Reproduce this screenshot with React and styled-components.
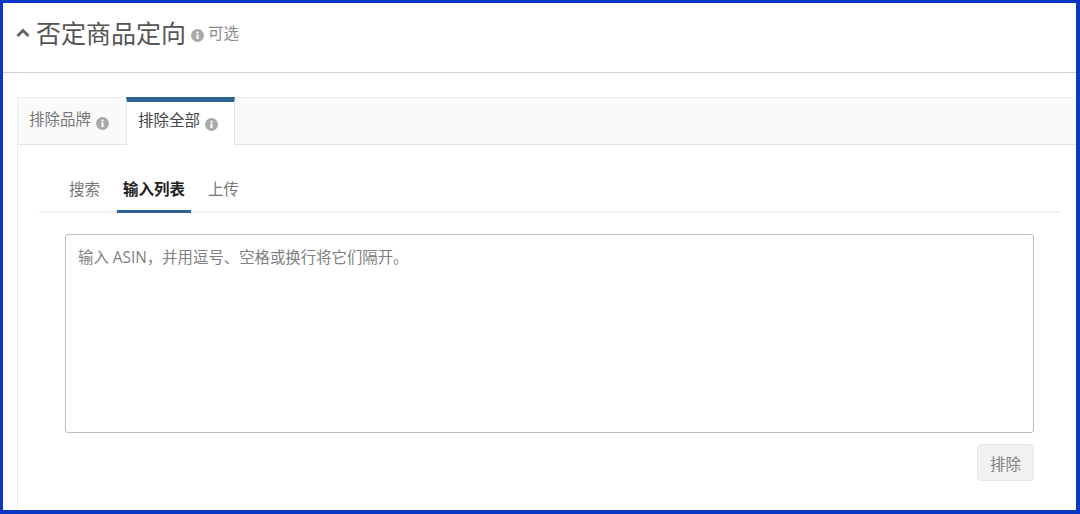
import React from "react";
import styled, { createGlobalStyle } from "styled-components";

const Global = createGlobalStyle`
  html, body { margin: 0; padding: 0; background: #fff; }
  body { font-family: "Open Sans", "Noto Sans CJK SC", sans-serif; }
`;

const Frame = styled.div`
  box-sizing: border-box;
  width: 1080px;
  height: 514px;
  border-style: solid;
  border-color: #0a37c4;
  border-width: 3px 4px 4px 3px;
  overflow: hidden;
  background: #fff;
`;

const Header = styled.header`
  box-sizing: border-box;
  height: 70px;
  border-bottom: 1px solid #cfcfcf;
  display: flex;
  align-items: flex-start;
  padding: 12px 0 0 13px;
`;

const Chevron = styled.svg`
  width: 14px;
  height: 10px;
  margin: 13px 6px 0 0;
  flex: none;
`;

const Title = styled.h1`
  margin: 0;
  font-size: 25px;
  line-height: 34px;
  font-weight: 400;
  color: #555;
  font-family: "Noto Sans CJK SC", sans-serif;
`;

const Optional = styled.span`
  font-size: 15.5px;
  line-height: 20px;
  color: #8a8a8a;
  font-family: "Noto Sans CJK SC", sans-serif;
  margin: 7px 0 0 4px;
`;

const InfoSvg = styled.svg`
  width: 13px;
  height: 13px;
  flex: none;
  margin: ${(p) => p.$margin};
`;

const Info = ({ margin }) => (
  <InfoSvg viewBox="0 0 13 13" $margin={margin}>
    <circle cx="6.5" cy="6.5" r="6.5" fill="#a9a9a9" />
    <rect x="5.5" y="5.5" width="2" height="4.6" fill="#fff" />
    <rect x="5.5" y="2.7" width="2" height="1.9" fill="#fff" />
  </InfoSvg>
);

const Panel = styled.section`
  margin: 24px 0 0 14px;
  border-left: 1px solid #ececec;
  height: 414px;
`;

const TabBar = styled.div`
  box-sizing: border-box;
  height: 48px;
  display: flex;
  background: #fafafa;
  border-top: 1px solid #ececec;
  border-bottom: 1px solid #e4e4e4;
`;

const Tab = styled.div`
  box-sizing: border-box;
  display: flex;
  align-items: flex-start;
  font-size: 15.5px;
  line-height: 22px;
  font-family: "Noto Sans CJK SC", sans-serif;
  ${(p) =>
    p.$active
      ? `
    width: 109px;
    height: 48px;
    margin-top: -1px;
    padding: 6px 0 0 11px;
    color: #444;
    background: #fff;
    border-top: 5px solid #2e6396;
    border-left: 1px solid #e8e8e8;
    border-right: 1px solid #e4e4e4;
  `
      : `
    width: 108px;
    padding: 9px 0 0 11px;
    color: #777;
  `}
`;

const Body = styled.div`
  padding: 30px 0 0 21px;
`;

const SubTabs = styled.nav`
  width: 1021px;
  height: 38px;
  box-sizing: border-box;
  border-bottom: 2px solid #f0f0f0;
  display: flex;
  padding-left: 24px;
  gap: 11px;
`;

const SubTab = styled.div`
  box-sizing: border-box;
  height: 38px;
  padding: 2px 6px 0;
  font-size: 15.5px;
  line-height: 22px;
  font-family: "Noto Sans CJK SC", sans-serif;
  font-weight: ${(p) => (p.$active ? 700 : 400)};
  color: ${(p) => (p.$active ? "#222" : "#777")};
  border-bottom: 3px solid ${(p) => (p.$active ? "#2e6396" : "transparent")};
`;

const Content = styled.div`
  margin: 21px 0 0 26px;
  width: 969px;
`;

const Input = styled.textarea`
  display: block;
  box-sizing: border-box;
  width: 969px;
  height: 199px;
  padding: 12px 12px;
  border: 1px solid #bcbcbc;
  border-radius: 3px;
  outline: none;
  resize: none;
  font-size: 15.4px;
  line-height: 22px;
  font-family: "Open Sans", "Noto Sans CJK SC", sans-serif;
  &::placeholder { color: #808080; opacity: 1; }
`;

const Actions = styled.div`
  display: flex;
  justify-content: flex-end;
  margin-top: 11px;
`;

const Button = styled.button`
  box-sizing: border-box;
  width: 57px;
  height: 37px;
  background: #f1f1f1;
  border: 1px solid #e6e6e6;
  border-radius: 4px;
  color: #808080;
  font-size: 15.5px;
  font-family: "Noto Sans CJK SC", sans-serif;
  padding: 0;
`;

export default function App() {
  return (
    <Frame>
      <Global />
      <Header>
        <Chevron viewBox="0 0 14 10">
          <path d="M1.5 8 L7 2.5 L12.5 8" fill="none" stroke="#666" strokeWidth="3" />
        </Chevron>
        <Title>否定商品定向</Title>
        <Info margin="14px 0 0 5px" />
        <Optional>可选</Optional>
      </Header>
      <Panel>
        <TabBar>
          <Tab>
            排除品牌
            <Info margin="10px 0 0 5px" />
          </Tab>
          <Tab $active>
            排除全部
            <Info margin="10px 0 0 5px" />
          </Tab>
        </TabBar>
        <Body>
          <SubTabs>
            <SubTab>搜索</SubTab>
            <SubTab $active>输入列表</SubTab>
            <SubTab>上传</SubTab>
          </SubTabs>
          <Content>
            <Input placeholder="输入 ASIN，并用逗号、空格或换行将它们隔开。" />
            <Actions>
              <Button>排除</Button>
            </Actions>
          </Content>
        </Body>
      </Panel>
    </Frame>
  );
}
